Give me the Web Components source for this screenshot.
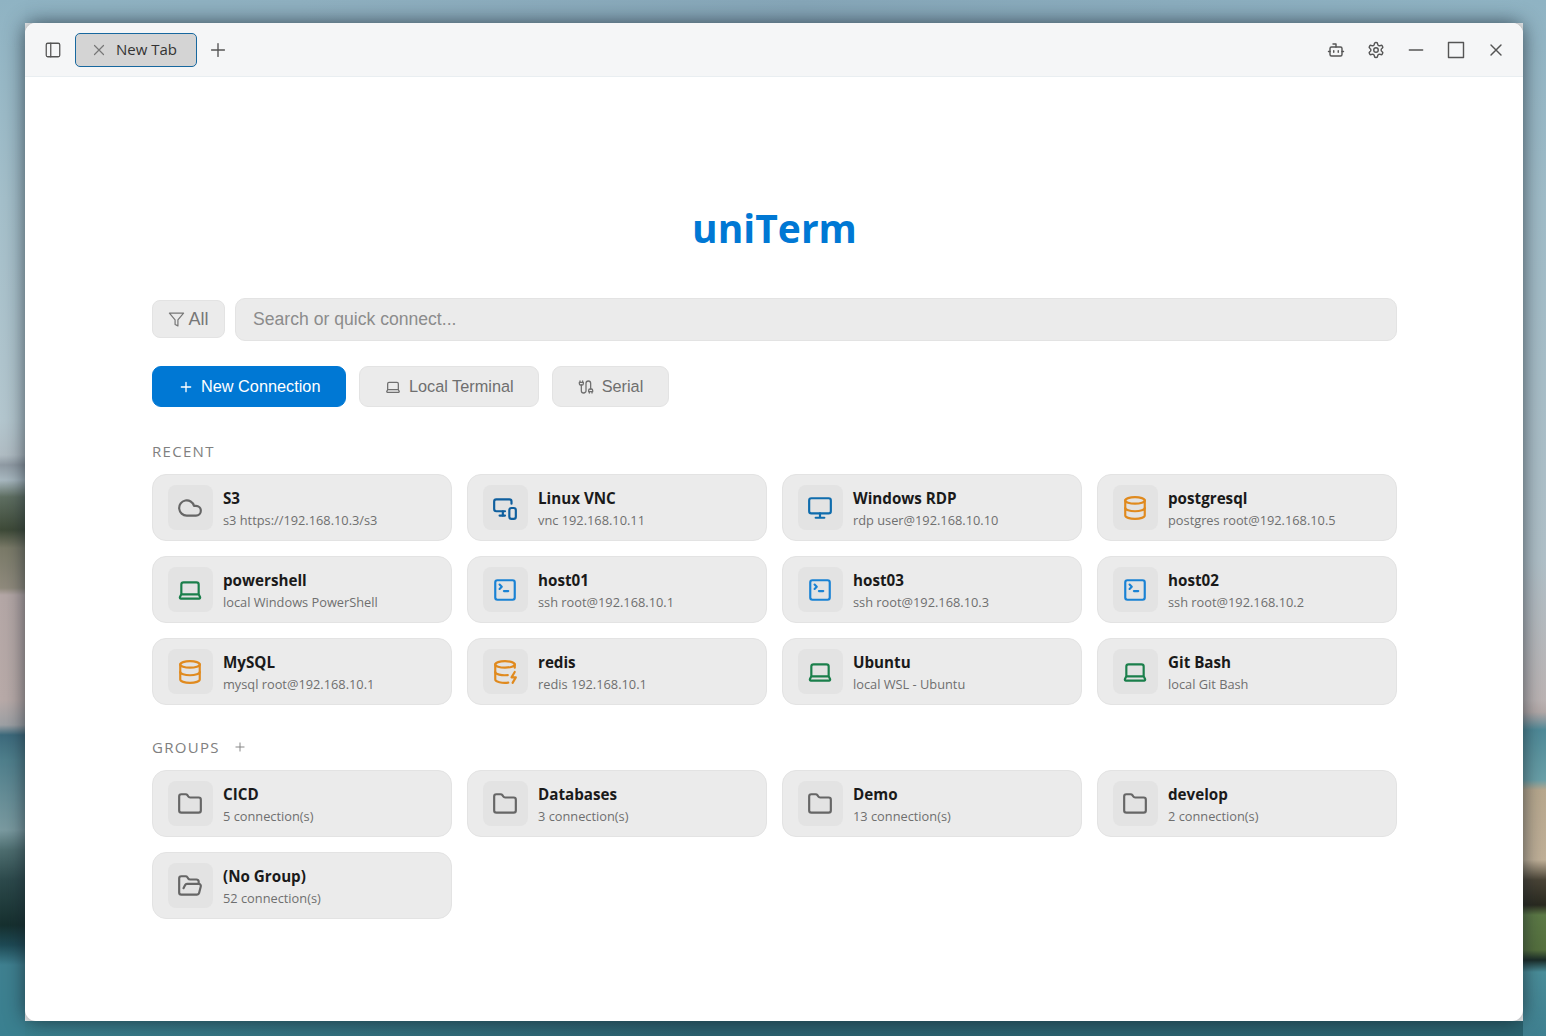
<!DOCTYPE html>
<html lang="en">
<head>
<meta charset="utf-8">
<title>uniTerm</title>
<style>
html,body{margin:0;padding:0;height:1036px;overflow:hidden;font-family:"Open Sans","Noto Sans",sans-serif;}
</style>
</head>
<body>
<ut-desktop>
  <ut-window>
    <ut-titlebar slot="bar">
      <ut-icon-btn name="panel" slot="left"></ut-icon-btn>
      <ut-tab slot="left">New Tab</ut-tab>
      <ut-icon-btn name="plus" big slot="left"></ut-icon-btn>
      <ut-icon-btn name="bot" small slot="right"></ut-icon-btn>
      <ut-icon-btn name="settings" small slot="right"></ut-icon-btn>
      <ut-icon-btn name="minus" big slot="right"></ut-icon-btn>
      <ut-icon-btn name="square" big slot="right"></ut-icon-btn>
      <ut-icon-btn name="x" big slot="right"></ut-icon-btn>
    </ut-titlebar>
    <ut-home>
      <ut-logo>uniTerm</ut-logo>
      <ut-search></ut-search>
      <ut-actions>
        <ut-button primary icon="plus">New Connection</ut-button>
        <ut-button icon="laptop">Local Terminal</ut-button>
        <ut-button icon="cable">Serial</ut-button>
      </ut-actions>
      <ut-section label="RECENT">
        <ut-card icon="cloud" tone="#666666" name="S3" sub="s3 https://192.168.10.3/s3"></ut-card>
        <ut-card icon="vnc" tone="#0f5f9e" name="Linux VNC" sub="vnc 192.168.10.11"></ut-card>
        <ut-card icon="monitor" tone="#0f6cad" name="Windows RDP" sub="rdp user@192.168.10.10"></ut-card>
        <ut-card icon="database" tone="#e08a1e" name="postgresql" sub="postgres root@192.168.10.5"></ut-card>
        <ut-card icon="laptop" tone="#1a7f4b" name="powershell" sub="local Windows PowerShell"></ut-card>
        <ut-card icon="terminal" tone="#1a82d4" name="host01" sub="ssh root@192.168.10.1"></ut-card>
        <ut-card icon="terminal" tone="#1a82d4" name="host03" sub="ssh root@192.168.10.3"></ut-card>
        <ut-card icon="terminal" tone="#1a82d4" name="host02" sub="ssh root@192.168.10.2"></ut-card>
        <ut-card icon="database" tone="#e08a1e" name="MySQL" sub="mysql root@192.168.10.1"></ut-card>
        <ut-card icon="dbzap" tone="#e08a1e" name="redis" sub="redis 192.168.10.1"></ut-card>
        <ut-card icon="laptop" tone="#1a7f4b" name="Ubuntu" sub="local WSL - Ubuntu"></ut-card>
        <ut-card icon="laptop" tone="#1a7f4b" name="Git Bash" sub="local Git Bash"></ut-card>
      </ut-section>
      <ut-section label="GROUPS" add>
        <ut-card icon="folder" tone="#666666" name="CICD" sub="5 connection(s)"></ut-card>
        <ut-card icon="folder" tone="#666666" name="Databases" sub="3 connection(s)"></ut-card>
        <ut-card icon="folder" tone="#666666" name="Demo" sub="13 connection(s)"></ut-card>
        <ut-card icon="folder" tone="#666666" name="develop" sub="2 connection(s)"></ut-card>
        <ut-card icon="folderopen" tone="#666666" name="(No Group)" sub="52 connection(s)"></ut-card>
      </ut-section>
    </ut-home>
  </ut-window>
</ut-desktop>
<script>
const ICONS={
 panel:'<rect x="3" y="3" width="18" height="18" rx="2"/><path d="M9 3v18"/>',
 plus:'<path d="M5 12h14M12 5v14"/>',
 x:'<path d="M18 6 6 18M6 6l12 12"/>',
 minus:'<path d="M4 12h16"/>',
 square:'<rect x="3" y="3" width="18" height="18"/>',
 bot:'<path d="M12 8V4H8"/><rect width="16" height="12" x="4" y="8" rx="2"/><path d="M2 14h2M20 14h2M15 13v2M9 13v2"/>',
 settings:'<path d="M12.22 2h-.44a2 2 0 0 0-2 2v.18a2 2 0 0 1-1 1.73l-.43.25a2 2 0 0 1-2 0l-.15-.08a2 2 0 0 0-2.73.73l-.22.38a2 2 0 0 0 .73 2.73l.15.1a2 2 0 0 1 1 1.72v.51a2 2 0 0 1-1 1.74l-.15.09a2 2 0 0 0-.73 2.73l.22.38a2 2 0 0 0 2.73.73l.15-.08a2 2 0 0 1 2 0l.43.25a2 2 0 0 1 1 1.73V20a2 2 0 0 0 2 2h.44a2 2 0 0 0 2-2v-.18a2 2 0 0 1 1-1.73l.43-.25a2 2 0 0 1 2 0l.15.08a2 2 0 0 0 2.73-.73l.22-.39a2 2 0 0 0-.73-2.73l-.15-.08a2 2 0 0 1-1-1.74v-.5a2 2 0 0 1 1-1.74l.15-.09a2 2 0 0 0 .73-2.73l-.22-.38a2 2 0 0 0-2.73-.73l-.15.08a2 2 0 0 1-2 0l-.43-.25a2 2 0 0 1-1-1.73V4a2 2 0 0 0-2-2z"/><circle cx="12" cy="12" r="3"/>',
 funnel:'<path d="M22 3H2l8 9.46V19l4 2v-8.54L22 3z"/>',
 laptop:'<path d="M20 16V7a2 2 0 0 0-2-2H6a2 2 0 0 0-2 2v9m16 0H4m16 0 1.28 2.55a1 1 0 0 1-.9 1.45H3.62a1 1 0 0 1-.9-1.45L4 16"/>',
 cable:'<path d="M4 9a2 2 0 0 1-2-2V5h6v2a2 2 0 0 1-2 2Z"/><path d="M3 5V3M7 5V3"/><path d="M19 15V6.5a3.5 3.5 0 0 0-7 0v11a3.5 3.5 0 0 1-7 0V9"/><path d="M17 21v-2M21 21v-2"/><path d="M22 19h-6v-2a2 2 0 0 1 2-2h2a2 2 0 0 1 2 2Z"/>',
 cloud:'<path d="M17.5 19H9a7 7 0 1 1 6.71-9h1.79a4.5 4.5 0 1 1 0 9Z"/>',
 vnc:'<path d="M18 8V6a2 2 0 0 0-2-2H4a2 2 0 0 0-2 2v7a2 2 0 0 0 2 2h8"/><path d="M10 19v-3.96 3.15"/><path d="M7 19h5"/><rect width="6" height="10" x="16" y="12" rx="2"/>',
 monitor:'<rect width="20" height="14" x="2" y="3" rx="2"/><path d="M8 21h8M12 17v4"/>',
 database:'<ellipse cx="12" cy="5" rx="9" ry="3"/><path d="M3 5V19A9 3 0 0 0 21 19V5"/><path d="M3 12A9 3 0 0 0 21 12"/>',
 dbzap:'<ellipse cx="12" cy="5" rx="9" ry="3"/><path d="M3 5V19A9 3 0 0 0 15 21.84"/><path d="M21 5V8"/><path d="M21 12L18 17H22L19 22"/><path d="M3 12A9 3 0 0 0 14.59 14.87"/>',
 terminal:'<path d="m7 11 2-2-2-2"/><path d="M11 13h4"/><rect width="18" height="18" x="3" y="3" rx="2"/>',
 folder:'<path d="M20 20a2 2 0 0 0 2-2V8a2 2 0 0 0-2-2h-7.9a2 2 0 0 1-1.69-.9L9.6 3.9A2 2 0 0 0 7.93 3H4a2 2 0 0 0-2 2v13a2 2 0 0 0 2 2Z"/>',
 folderopen:'<path d="m6 14 1.5-2.9A2 2 0 0 1 9.24 10H20a2 2 0 0 1 1.94 2.5l-1.54 6a2 2 0 0 1-1.95 1.5H4a2 2 0 0 1-2-2V5a2 2 0 0 1 2-2h3.9a2 2 0 0 1 1.69.9l.81 1.2a2 2 0 0 0 1.67.9H18a2 2 0 0 1 2 2v2"/>'
};
const svg=(n,s,w=2)=>`<svg xmlns="http://www.w3.org/2000/svg" width="${s}" height="${s}" viewBox="0 0 24 24" fill="none" stroke="currentColor" stroke-width="${w}" stroke-linecap="round" stroke-linejoin="round" style="display:block">${ICONS[n]}</svg>`;
function def(tag,html){
  customElements.define(tag,class extends HTMLElement{
    constructor(){super();this.attachShadow({mode:'open'});}
    connectedCallback(){this.shadowRoot.innerHTML=typeof html==='function'?html(this):html;}
  });
}
def('ut-desktop',`<style>:host{display:block;box-sizing:border-box;width:1546px;height:1036px;padding:23px 23px 15px 25px;overflow:hidden;
 background:
 linear-gradient(180deg,#8fb3c3 0,#a4bfca 200px,#b3c6ce 420px,#b0bcc3 455px,#8f9aa3 465px,#a8b8c0 480px,#5f6f62 497px,#3e4a38 530px,#7a7a68 548px,#8f8a7c 588px,#b4a7a6 595px,#b8aaa8 700px,#9da0a4 725px,#3d6a7c 735px,#4f7f8c 760px,#7a9aa0 830px,#4e6e70 850px,#2d4a4c 880px,#16302f 925px,#1e4a55 945px,#3f8090 965px,#3a8090 1036px) 0 0/25px 100% no-repeat,
 linear-gradient(180deg,#8fb3c3 0,#a0bcc8 200px,#b0c0c8 560px,#bcb4b4 700px,#b3a9a8 712px,#8a9aa0 720px,#4f8a98 730px,#6aa0a8 780px,#b8a88e 790px,#c0b098 860px,#4a4436 880px,#2a2a20 905px,#5d7a46 915px,#55703e 950px,#1a2c28 960px,#4a8e9a 972px,#3f8090 1036px) 100% 0/23px 100% no-repeat,
 linear-gradient(90deg,#8fb3c3 0,#8fb0c0 300px,#86a6b8 800px,#90b4c4 1546px) 0 0/100% 23px no-repeat,
 linear-gradient(90deg,#3a808e 0,#2c6270 700px,#2b6470 1546px) 0 100%/100% 15px no-repeat;}
</style><slot></slot>`);
def('ut-window',`<style>:host{display:flex;flex-direction:column;height:100%;background:#fff;border-radius:11px;overflow:hidden;box-shadow:0 0 20px rgba(20,30,40,.7);}
</style><slot name="bar"></slot><slot></slot>`);
def('ut-titlebar',`<style>:host{display:flex;align-items:center;justify-content:space-between;box-sizing:border-box;height:54px;flex:none;background:#f5f6f7;border-bottom:1px solid #e9eef1;padding:0 7px 0 8px;}
.g{display:flex;align-items:center}
</style><div class="g"><slot name="left"></slot></div><div class="g"><slot name="right"></slot></div>`);
def('ut-icon-btn',h=>{const n=h.getAttribute('name');const s=n==='plus'?22:h.hasAttribute('big')?20:18;const w=h.hasAttribute('small')?1.9:1.7;
 return `<style>:host{display:flex;align-items:center;justify-content:center;width:40px;height:34px;color:#555;}
 svg{${h.hasAttribute('small')?'margin-right:1px;':''}}</style>${svg(n,s,n==='plus'?1.5:w)}`;});
def('ut-tab',()=>`<style>:host{display:flex;align-items:center;box-sizing:border-box;width:122px;height:34px;margin:0 1px 0 2px;padding:0 0 0 14px;gap:8px;background:#d4d4d4;border:1px solid #17689f;border-radius:5px;color:#333;font:15px/1 "Open Sans",sans-serif;}
svg{color:#777;flex:none}</style>${svg('x',18,1.6)}<span><slot></slot></span>`);
def('ut-home',`<style>:host{display:flex;flex-direction:column;flex:1;box-sizing:border-box;padding:0 126px 0 127px;}</style><slot></slot>`);
def('ut-logo',`<style>:host{display:block;text-align:center;margin-top:122px;height:58px;font:700 39px/57px "Open Sans",sans-serif;color:#0078d4;}</style><slot></slot>`);
def('ut-search',()=>`<style>:host{display:flex;align-items:flex-start;gap:10px;margin-top:41px;height:43px;font-family:"Liberation Sans",sans-serif;}
.f{display:flex;align-items:center;justify-content:center;gap:3px;box-sizing:border-box;width:73px;height:38px;margin-top:2px;background:#ebebeb;border:1px solid #e3e3e3;border-radius:8px;color:#777;font-size:18px;}
.i{flex:1;display:flex;align-items:center;box-sizing:border-box;height:43px;padding:0 17px;background:#ebebeb;border:1px solid #e3e3e3;border-radius:10px;color:#8c8c8c;font-size:17.6px;}
</style><div class="f">${svg('funnel',17,1.7)}<span>All</span></div><div class="i">Search or quick connect...</div>`);
def('ut-actions',`<style>:host{display:flex;gap:13px;margin-top:25px;}</style><slot></slot>`);
def('ut-button',h=>{const p=h.hasAttribute('primary');
 return `<style>:host{display:flex;align-items:center;justify-content:center;gap:${p?7:8}px;box-sizing:border-box;height:41px;padding:0 ${p?25:24.5}px;border-radius:9px;font:16.3px "Liberation Sans",sans-serif;
 background:${p?'#0078d4':'#ebebeb'};color:${p?'#fff':'#6f6f6f'};border:1px solid ${p?'#0078d4':'#e3e3e3'};}
 svg{flex:none}</style>${svg(h.getAttribute('icon'),16,p?2:1.9)}<span><slot></slot></span>`;});
def('ut-section',h=>`<style>:host{display:block;}
.h{display:flex;align-items:center;gap:13px;height:20px;color:#808080;font:15px/20px "Open Sans",sans-serif;letter-spacing:1.3px;}
.g{display:grid;grid-template-columns:repeat(4,300px);gap:15px;margin-top:13px;}
:host([add]) .h{margin-top:32px}
:host([add]) .g{margin-top:13px}
:host(:not([add])) .h{margin-top:34px}
</style><div class="h"><span>${h.getAttribute('label')}</span>${h.hasAttribute('add')?svg('plus',14,1.6):''}</div><div class="g"><slot></slot></div>`);
def('ut-card',h=>`<style>:host{display:flex;align-items:center;gap:10px;box-sizing:border-box;height:67px;padding:0 15px;background:#ebebeb;border:1px solid #e3e3e3;border-radius:14px;font-family:"Open Sans",sans-serif;}
.b{display:flex;align-items:center;justify-content:center;flex:none;width:45px;height:45px;border-radius:8px;background:#e3e3e3;color:${h.getAttribute('tone')};}
.b svg{margin-right:2px}
.t{display:flex;flex-direction:column;gap:3px;min-width:0;padding-top:2px}
.n{font-weight:700;font-size:15.2px;line-height:20px;color:#1a1a1a;}
.s{font-size:12.8px;line-height:18px;color:#6f6f6f;white-space:nowrap}
</style><div class="b">${svg(h.getAttribute('icon'),26,2)}</div><div class="t"><div class="n">${h.getAttribute('name')}</div><div class="s">${h.getAttribute('sub')}</div></div>`);
</script>
</body>
</html>
